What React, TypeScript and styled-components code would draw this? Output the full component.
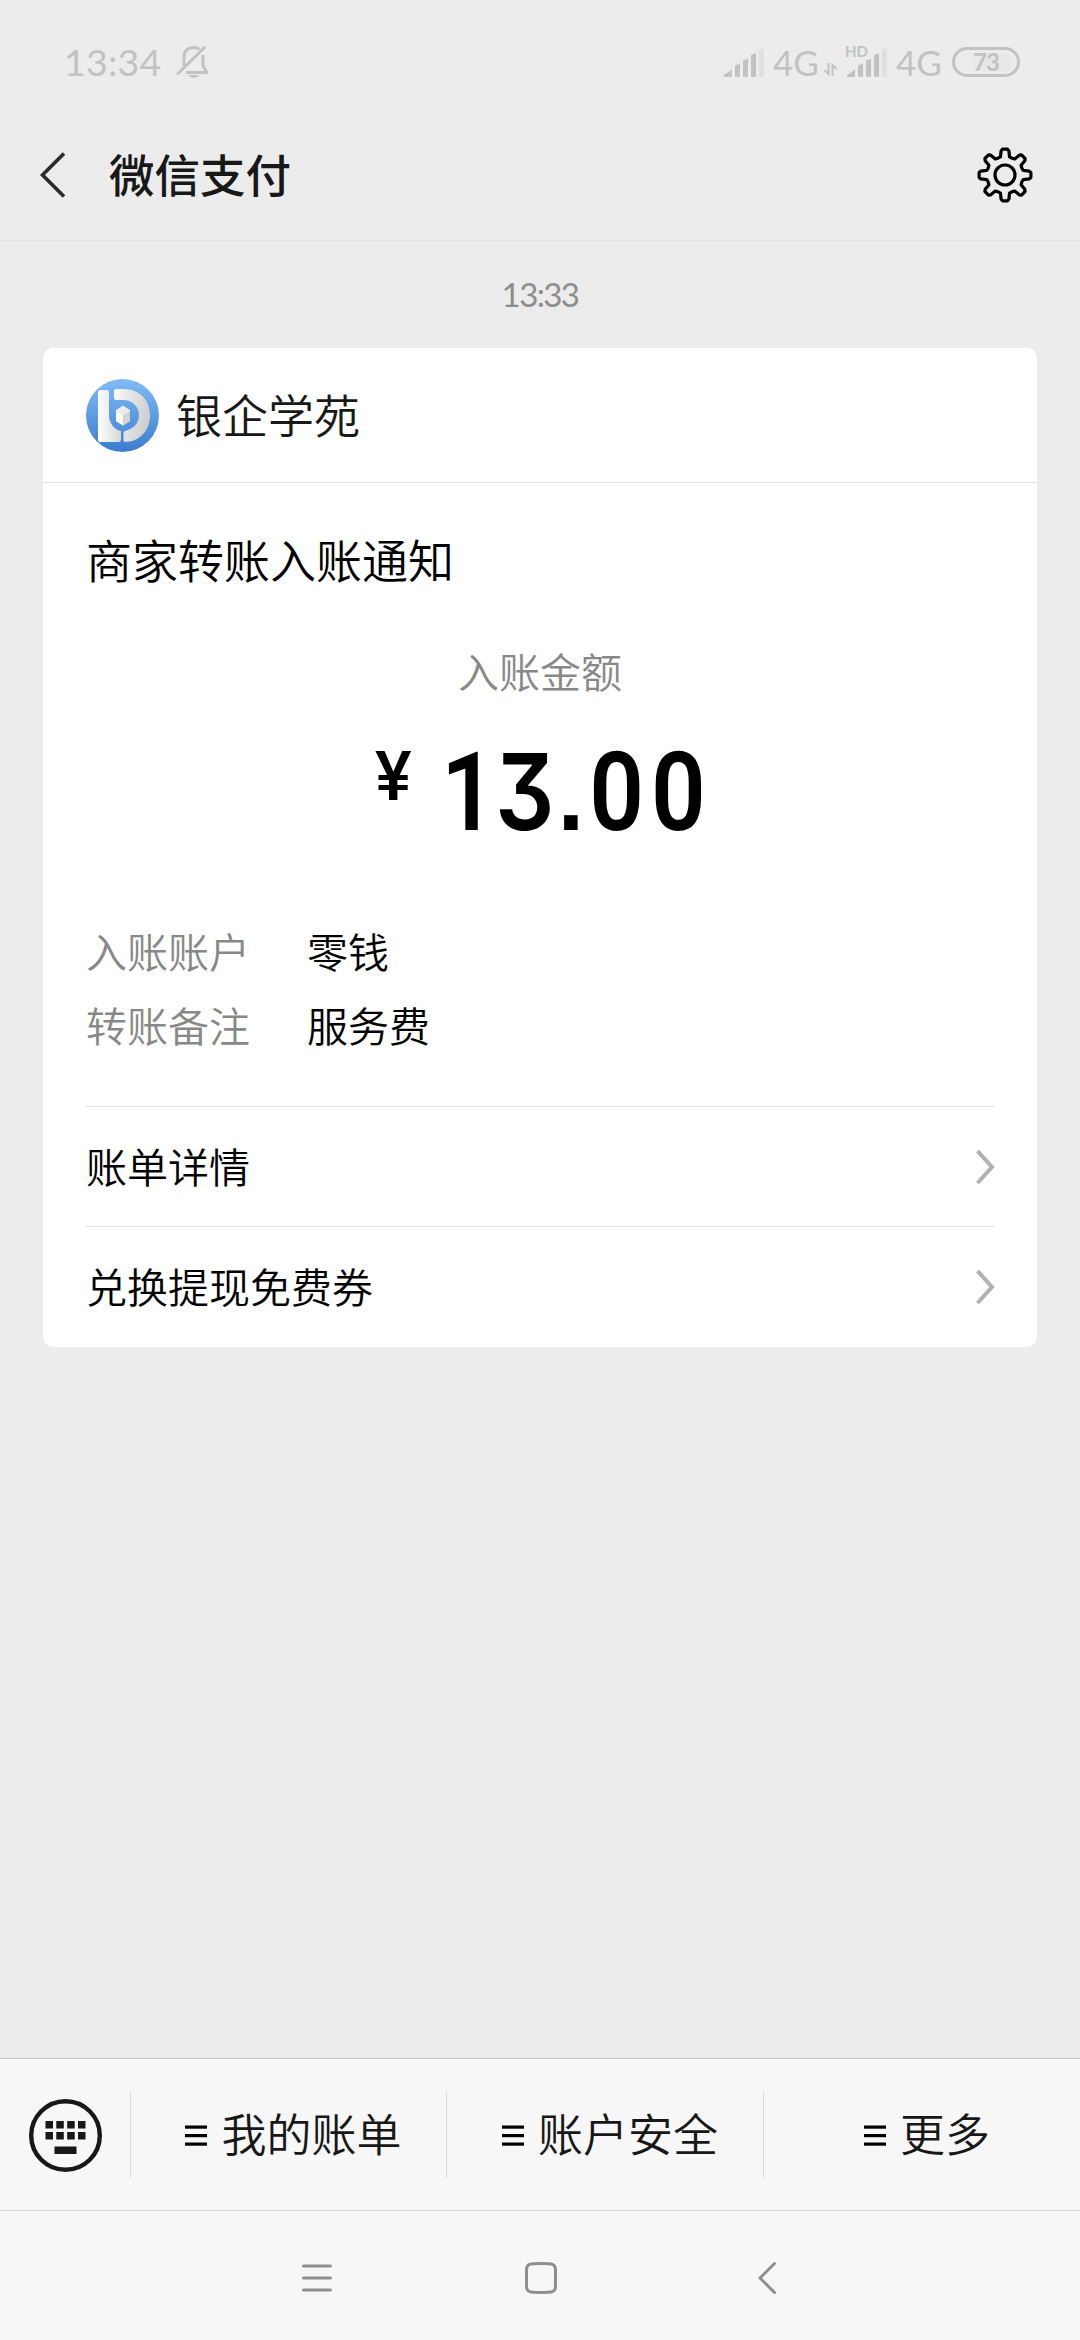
import React from 'react';
import styled, { createGlobalStyle } from 'styled-components';

const cjk = '"Noto Sans CJK SC", sans-serif';
const latin = 'Lato, "Noto Sans CJK SC", sans-serif';

const GlobalStyle = createGlobalStyle`
  * { box-sizing: border-box; }
  body { margin: 0; background: #ececec; }
  svg { display: block; flex: none; overflow: visible; }
`;

const Screen = styled.div`
  width: 1080px;
  height: 2340px;
  display: flex;
  flex-direction: column;
  background: #ececec;
  color: #181818;
  font-family: ${cjk};
  font-weight: 350;
  white-space: nowrap;
  overflow: hidden;
`;

const StatusBar = styled.div`
  height: 110px;
  padding: 14px 60px 0 64px;
  display: flex;
  align-items: center;
  justify-content: space-between;
  color: #c2c2c2;
  font-family: ${latin};
`;
const StatusGroup = styled.div`
  display: flex;
  align-items: center;
`;
const Clock = styled.span`
  width: 112px;
  font-size: 37.5px;
  line-height: 40px;
  letter-spacing: 0.2px;
  font-weight: 400;
`;
const Network = styled.span<{ $w: number }>`
  width: ${p => p.$w}px;
  padding: 0 0 1px 8px;
  font-size: 35px;
  line-height: 40px;
  font-weight: 400;
`;
const SignalBox = styled.div`
  position: relative;
  width: 41px;
`;
const HdTag = styled.span`
  position: absolute;
  left: -2px;
  top: -5px;
  font-size: 15px;
  line-height: 16px;
  font-weight: 700;
`;
const Battery = styled.div`
  width: 68px;
  height: 30px;
  padding: 3px 5px 3px 18px;
  border: 3px solid #c2c2c2;
  border-radius: 15px;
  display: flex;
`;
const BatteryLevel = styled.span`
  flex: 1;
  border-radius: 0 8px 8px 0;
  background: #e8e8e8;
  font-size: 24px;
  line-height: 18px;
  letter-spacing: -1px;
  font-weight: 700;
`;

const TitleBar = styled.header`
  height: 131px;
  padding: 0 47px 0 40px;
  display: flex;
  align-items: center;
  border-bottom: 1px solid #e2e2e2;
`;
const Title = styled.h1`
  flex: 1;
  margin: 0 0 0 43px;
  padding-bottom: 4px;
  font-size: 45.5px;
  line-height: 60px;
  font-weight: 500;
`;

const Feed = styled.main`
  flex: 1;
  display: flex;
  flex-direction: column;
  align-items: center;
`;
const Stamp = styled.time`
  height: 107px;
  padding-top: 33px;
  font-family: ${latin};
  font-size: 33px;
  line-height: 40px;
  letter-spacing: -1.6px;
  font-weight: 400;
  color: #8e8e8e;
`;
const Card = styled.section`
  width: 994px;
  height: 999px;
  border-radius: 10px;
  background: #fff;
  color: #000;
`;
const CardHead = styled.div`
  height: 135px;
  padding: 0 43px;
  display: flex;
  align-items: center;
  gap: 17px;
  border-bottom: 1px solid #e3e3e3;
  color: #181818;
  font-size: 46px;
`;
const Label = styled.span`
  padding-bottom: 4px;
`;
const CardBody = styled.div`
  padding: 0 43px;
  display: flex;
  flex-direction: column;
`;
const Heading = styled.h2`
  margin: 45px 0 0;
  font-size: 46px;
  line-height: 60px;
  font-weight: 350;
`;
const AmountLabel = styled.div`
  margin-top: 52px;
  text-align: center;
  font-size: 41px;
  line-height: 60px;
  color: #888;
`;
const Amount = styled.div`
  height: 215px;
  padding: 37px 0 0 289px;
  display: flex;
  align-items: flex-start;
`;
const Currency = styled.span`
  width: 66px;
  font-family: Roboto, sans-serif;
  font-weight: 500;
  font-size: 69px;
  line-height: 80px;
`;
const Digits = styled.span`
  font-family: Roboto, sans-serif;
  font-weight: 600;
  font-size: 109px;
  line-height: 109px;
  letter-spacing: 8px;
  transform: scaleX(0.88);
  transform-origin: 0 0;
`;
const NarrowOne = styled.span`
  letter-spacing: -1px;
`;
const FlatThree = styled.span`
  display: inline-block;
  font-family: Inter, sans-serif;
  font-feature-settings: 'cv09', 'ss07';
  font-weight: 600;
  font-size: 106px;
  line-height: 109px;
  letter-spacing: 4px;
`;
const Details = styled.div`
  height: 191px;
`;
const Detail = styled.div`
  height: 74px;
  display: grid;
  grid-template-columns: 221px 1fr;
  align-items: center;
  font-size: 41px;
`;
const DetailLabel = styled(Label)`
  color: #888;
`;
const LinkRow = styled.a`
  height: 120px;
  display: flex;
  align-items: center;
  justify-content: space-between;
  border-top: 1px solid #e3e3e3;
  font-size: 41px;
`;

const MenuBar = styled.nav`
  height: 152px;
  display: flex;
  align-items: center;
  background: #f7f7f7;
  border-top: 1px solid #c4c4c4;
`;
const KeyboardCell = styled.div`
  width: 130px;
  padding: 2px 0 0 29px;
`;
const MenuItem = styled.div<{ $w: number }>`
  width: ${p => p.$w}px;
  height: 86px;
  padding-left: 10px;
  display: flex;
  align-items: center;
  justify-content: center;
  gap: 14px;
  border-left: 1px solid #d9d9d9;
  font-size: 45px;
`;
const SystemNav = styled.div`
  height: 130px;
  padding: 4px 304px 0 302px;
  display: flex;
  align-items: center;
  justify-content: space-between;
  background: #f7f7f7;
  border-top: 1px solid #d9d9d9;
`;
const HomeKey = styled.div`
  margin-right: 9px;
`;

const BellOff = () => (
  <svg width="34" height="34" viewBox="0 0 34 34" fill="none" stroke="#c2c2c2" strokeWidth="3">
    <path d="M8 21V13C8 6 12 2.500 17.500 2.500C20 2.500 22 3 23.500 4.500" />
    <path d="M27 10V21L31 27.500H10" strokeLinejoin="round" />
    <path d="M2 28.500L28.500 2.500" strokeLinecap="round" />
    <path d="M12.500 30H23C21.500 33.500 14 33.500 12.500 30Z" fill="#c2c2c2" stroke="none" />
  </svg>
);

const Signal = () => (
  <svg width="41" height="29" viewBox="0 0 41 29" fill="#c2c2c2">
    <path d="M0 29V27L8 21.500V29Z" />
    <path d="M11 29V17.500L16 15.500V29Z" />
    <path d="M19 29V12.500L24 10.500V29Z" />
    <path d="M27 29V7L32 5V29Z" />
    <path d="M35 29V2L40 0V29Z" fill="#dfdfdf" />
  </svg>
);

const ArrowsBox = styled.div`
  padding-top: 14px;
`;
const DataArrows = () => (
  <ArrowsBox>
    <svg width="23" height="13" viewBox="0 0 23 13" fill="none" stroke="#c2c2c2" strokeWidth="2">
      <path d="M4.500 0V11L0.500 7M8.500 13V2L12.500 6" />
    </svg>
  </ArrowsBox>
);

const Back = () => (
  <svg width="26" height="46" viewBox="0 0 26 46" fill="none" stroke="#2b2b2b" strokeWidth="3.600">
    <path d="M24 1.500L2.500 23L24 44.500" />
  </svg>
);

const gearPath = (() => {
  const pts: string[] = [];
  const tooth: [number, number][] = [[-22.5, 18.2], [-14, 18.8], [-9.2, 24.4], [-5.6, 26], [5.6, 26], [9.2, 24.4], [14, 18.8]];
  for (let i = 0; i < 8; i++) {
    tooth.forEach(([a, r]) => {
      const t = ((i * 45 + a - 90) * Math.PI) / 180;
      pts.push(`${(28 + r * Math.cos(t)).toFixed(2)} ${(28 + r * Math.sin(t)).toFixed(2)}`);
    });
  }
  return `M${pts.join('L')}Z`;
})();

const Gear = () => (
  <svg width="56" height="56" viewBox="0 0 56 56" fill="none" stroke="#000" strokeWidth="3.200" strokeLinejoin="round">
    <path d={gearPath} />
    <circle cx="28" cy="28" r="10" />
  </svg>
);

const Logo = () => (
  <svg width="73" height="73" viewBox="0 0 73 73">
    <defs>
      <linearGradient id="sky" x1="0" y1="0" x2="0" y2="1">
        <stop offset="0" stopColor="#80bbf8" />
        <stop offset="1" stopColor="#3b7dce" />
      </linearGradient>
      <linearGradient id="silverL" x1="0" y1="0" x2="1" y2="0">
        <stop offset="0" stopColor="#ffffff" />
        <stop offset="1" stopColor="#d6d6d6" />
      </linearGradient>
      <linearGradient id="silverR" x1="0" y1="0" x2="1" y2="0.300">
        <stop offset="0" stopColor="#fafafa" />
        <stop offset="1" stopColor="#cfcfcf" />
      </linearGradient>
    </defs>
    <circle cx="36.500" cy="36.500" r="36.500" fill="url(#sky)" />
    <path d="M14 11H21Q23 11 23 13V36C23 44 28 50.500 35 52V61Q35 63 33 63H14Q12 63 12 61V13Q12 11 14 11Z" fill="url(#silverL)" />
    <path d="M30 10H37C54 10 64 21 64 36.500C64 52 53 63 39 63Q37.500 63 37.500 61V54Q37.500 52 39 52C47 50 53 44.500 53 36.500C53 27 46 21 37 21H30Q28 21 28 19V12Q28 10 30 10Z" fill="url(#silverR)" />
    <path d="M37 26.500L44 31V42L37 46.500L30 42V31Z" fill="#ececec" />
    <path d="M37 36.500L44 32V42L37 46.500Z" fill="#d2d2d2" />
    <path d="M37 36.500L30 32V42L37 46.500Z" fill="#fafafa" />
  </svg>
);

const Chevron = () => (
  <svg width="18" height="36" viewBox="0 0 18 36" fill="none" stroke="#b2b2b2" strokeWidth="4">
    <path d="M1.500 2L16 18L1.500 34" />
  </svg>
);

const Keyboard = () => (
  <svg width="73" height="73" viewBox="0 0 73 73" fill="#181818">
    <circle cx="36.500" cy="36.500" r="34.300" fill="none" stroke="#181818" strokeWidth="4.400" />
    {[22, 33].map(y => [16.5, 27.3, 38.2, 49].map(x => <rect key={`${x}-${y}`} x={x} y={y} width="7.500" height="7.500" />))}
    <rect x="25.500" y="47.500" width="22" height="7.500" />
  </svg>
);

const ListMark = () => (
  <svg width="22" height="22" viewBox="0 0 22 22" fill="#000">
    <rect y="1.500" width="22" height="3.200" />
    <rect y="10" width="22" height="3.200" />
    <rect y="18.500" width="22" height="3.200" />
  </svg>
);

const Recents = () => (
  <svg width="30" height="28" viewBox="0 0 30 28" stroke="#8f8f8f" strokeWidth="3" strokeLinecap="round">
    <path d="M1.500 2H28.500M1.500 14H28.500M1.500 26H28.500" />
  </svg>
);
const Home = () => (
  <HomeKey>
    <svg width="32" height="32" viewBox="0 0 32 32" fill="none" stroke="#8f8f8f" strokeWidth="3">
      <path d="M16 1.500C27 1.500 30.500 1.500 30.500 8V24C30.500 30.500 27 30.500 16 30.500C5 30.500 1.500 30.500 1.500 24V8C1.500 1.500 5 1.500 16 1.500Z" />
    </svg>
  </HomeKey>
);
const NavBack = () => (
  <svg width="18" height="32" viewBox="0 0 18 32" fill="none" stroke="#8f8f8f" strokeWidth="3" strokeLinecap="round" strokeLinejoin="round">
    <path d="M16.500 1.500L2 16L16.500 30.500" />
  </svg>
);

const details = [['入账账户', '零钱'], ['转账备注', '服务费']];
const links = ['账单详情', '兑换提现免费券'];
const menus: [string, number][] = [['我的账单', 316], ['账户安全', 317], ['更多', 317]];

export default function App() {
  return (
    <Screen>
      <GlobalStyle />
      <StatusBar>
        <StatusGroup>
          <Clock>13:34</Clock>
          <BellOff />
        </StatusGroup>
        <StatusGroup>
          <SignalBox><Signal /></SignalBox>
          <Network $w={59}>4G</Network>
          <DataArrows />
          <SignalBox><HdTag>HD</HdTag><Signal /></SignalBox>
          <Network $w={64}>4G</Network>
          <Battery><BatteryLevel>73</BatteryLevel></Battery>
        </StatusGroup>
      </StatusBar>
      <TitleBar>
        <Back />
        <Title>微信支付</Title>
        <Gear />
      </TitleBar>
      <Feed>
        <Stamp>13:33</Stamp>
        <Card>
          <CardHead><Logo /><Label>银企学苑</Label></CardHead>
          <CardBody>
            <Heading>商家转账入账通知</Heading>
            <AmountLabel>入账金额</AmountLabel>
            <Amount>
              <Currency>¥</Currency>
              <Digits><NarrowOne>1</NarrowOne><FlatThree>3.</FlatThree>00</Digits>
            </Amount>
            <Details>
              {details.map(([k, v]) => (
                <Detail key={k}><DetailLabel>{k}</DetailLabel><Label>{v}</Label></Detail>
              ))}
            </Details>
            {links.map(t => <LinkRow key={t}><Label>{t}</Label><Chevron /></LinkRow>)}
          </CardBody>
        </Card>
      </Feed>
      <MenuBar>
        <KeyboardCell><Keyboard /></KeyboardCell>
        {menus.map(([t, w]) => <MenuItem key={t} $w={w}><ListMark /><Label>{t}</Label></MenuItem>)}
      </MenuBar>
      <SystemNav><Recents /><Home /><NavBack /></SystemNav>
    </Screen>
  );
}
